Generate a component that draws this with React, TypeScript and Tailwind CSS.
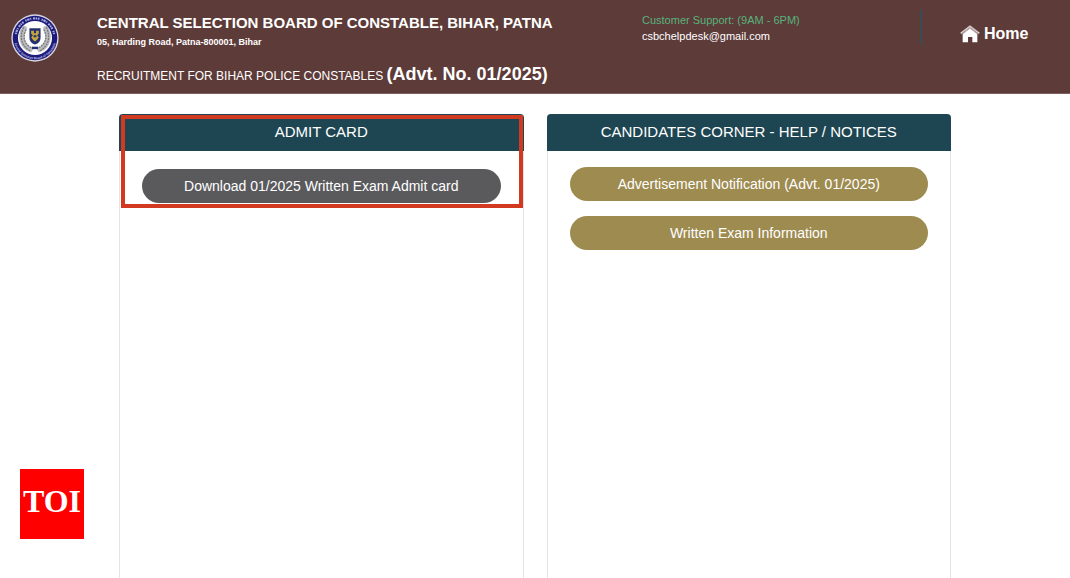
import { clsx } from 'clsx';
import type { ReactNode } from 'react';

interface NoticeLink {
  label: string;
  href: string;
}

const admitCardLinks: NoticeLink[] = [
  { label: 'Download 01/2025 Written Exam Admit card', href: '#admit-card' },
];

const noticeLinks: NoticeLink[] = [
  { label: 'Advertisement Notification (Advt. 01/2025)', href: '#advertisement' },
  { label: 'Written Exam Information', href: '#exam-information' },
];

const BoardSeal = () => (
  <svg viewBox="0 0 138 138" className="h-12 w-12 shrink-0" role="img" aria-label="Board seal">
    <defs>
      <path id="seal-bottom" d="M8 69a61 61 0 0 0 122 0" />
    </defs>
    <circle cx="69" cy="69" r="68" fill="#d9d6e2" />
    <circle cx="69" cy="69" r="64" fill="#1c1b7c" />
    <circle cx="69" cy="69" r="49" fill="#fbfbfd" />
    {/* Upper lettering band */}
    <path
      d="M14 58a56 56 0 0 1 110 0"
      fill="none"
      stroke="#a9a9d6"
      strokeWidth="6"
      strokeDasharray="4 2 7 2 3 5 6 2 4 2 5 6"
    />
    <text fill="#c9c9e8" fontSize="9" fontWeight="700" className="font-['Liberation_Sans',sans-serif]">
      <textPath href="#seal-bottom" startOffset="50%" textAnchor="middle">
        Central Selection Board of Constable
      </textPath>
    </text>
    {/* Wreath */}
    <g fill="none" strokeLinecap="round">
      <path d="M38 42C25 64 32 92 55 102" stroke="#b9babd" strokeWidth="15" />
      <path d="M100 42c13 22 6 50-17 60" stroke="#b9babd" strokeWidth="15" />
      <path d="M36 40C23 64 30 94 56 106M43 46C33 66 38 84 56 96" stroke="#77787b" strokeWidth="4" strokeDasharray="2 6" />
      <path d="M102 40c13 24 6 54-20 66M95 46c10 20 5 38-13 50" stroke="#77787b" strokeWidth="4" strokeDasharray="2 6" />
    </g>
    {/* Shield */}
    <path d="M53 41h32v27q0 14-16 20-16-6-16-20z" fill="#24306e" />
    <path d="M58 48h8v7h6v-7h8v9l-5 4 5 6-5 7-6 5-6-5-5-7 5-6-5-4z" fill="#c6a63d" />
    <path d="M65 61h8v6h-8z" fill="#24306e" />
    <path d="M60 94h18v7H60z" fill="#24306e" />
  </svg>
);

const HouseIcon = () => (
  <svg viewBox="0 0 60 54" className="h-[18px] w-5" aria-hidden="true">
    <path d="M8 25 30 8l22 17v27H37V36H24v16H8z" fill="#fff" />
    <path d="M2 25 30 4l28 21" fill="none" stroke="#d6cccc" strokeWidth="5" />
    <path d="M5 29 30 10l25 19" fill="none" stroke="#9b8786" strokeWidth="2" />
  </svg>
);

const PillLink = ({ link, muted = false }: { link: NoticeLink; muted?: boolean }) => (
  <a
    href={link.href}
    className={clsx(
      'flex h-[34px] items-center justify-center rounded-full text-sm text-white',
      muted ? 'bg-[#5a5a5d]' : 'bg-[#9e8b50]'
    )}
  >
    {link.label}
  </a>
);

const Panel = ({ title, children }: { title: string; children?: ReactNode }) => (
  <section className="relative flex flex-1 flex-col rounded-t border-x border-[#e4e4e4]">
    <h2 className="-mx-px flex h-[37px] items-center justify-center rounded-t bg-[#1e4652] text-[15px] text-white">
      {title}
    </h2>
    {children}
  </section>
);

export default function App() {
  return (
    <div className="flex min-h-screen flex-col bg-white font-['Liberation_Sans',Arial,sans-serif]">
      <header className="flex items-start border-b border-[#7d6160] bg-[#5d3b39] pb-[5px] pl-[11px] text-white">
        <div className="w-[86px] shrink-0 pt-[14px]">
          <BoardSeal />
        </div>
        <div className="flex-1 pt-3">
          <h1 className="text-[15px] leading-[22px] font-bold">
            CENTRAL SELECTION BOARD OF CONSTABLE, BIHAR, PATNA
          </h1>
          <p className="text-[9px] leading-4 font-bold">05, Harding Road, Patna-800001, Bihar</p>
          <p className="pt-3 text-xs leading-6">
            RECRUITMENT FOR BIHAR POLICE CONSTABLES{' '}
            <strong className="text-lg leading-6">(Advt. No. 01/2025)</strong>
          </p>
        </div>
        <div className="w-[278px] shrink-0 pt-3 text-[11px] leading-4">
          <p className="text-[#57b37c]">Customer Support: (9AM - 6PM)</p>
          <a href="mailto:csbchelpdesk@gmail.com">csbchelpdesk@gmail.com</a>
        </div>
        <nav className="mt-[10px] flex h-[34px] w-[150px] shrink-0 border-l-2 border-[#374c56] pl-[38px]">
          <a href="#home" className="flex items-center gap-1 pt-[14px] text-base font-bold">
            <HouseIcon />
            Home
          </a>
        </nav>
      </header>

      <main className="mx-auto flex w-full max-w-[832px] flex-1 gap-[23px] pt-5">
        <Panel title="ADMIT CARD">
          <div className="px-[22px] pt-[18px]">
            {admitCardLinks.map((link) => (
              <PillLink key={link.label} link={link} muted />
            ))}
          </div>
          {/* Highlight drawn over the first entry */}
          <div className="pointer-events-none absolute top-px right-0 left-px h-[93px] border-4 border-[#d13a20]" />
        </Panel>
        <Panel title="CANDIDATES CORNER - HELP / NOTICES">
          <div className="flex flex-col gap-[15px] px-[22px] pt-4">
            {noticeLinks.map((link) => (
              <PillLink key={link.label} link={link} />
            ))}
          </div>
        </Panel>
      </main>

      <div className="fixed bottom-[39px] left-5 flex h-[70px] w-16 items-center justify-center bg-[#ff0000] pb-[6px] font-['Liberation_Serif',serif] text-[32px] font-bold text-white">
        TOI
      </div>
    </div>
  );
}
